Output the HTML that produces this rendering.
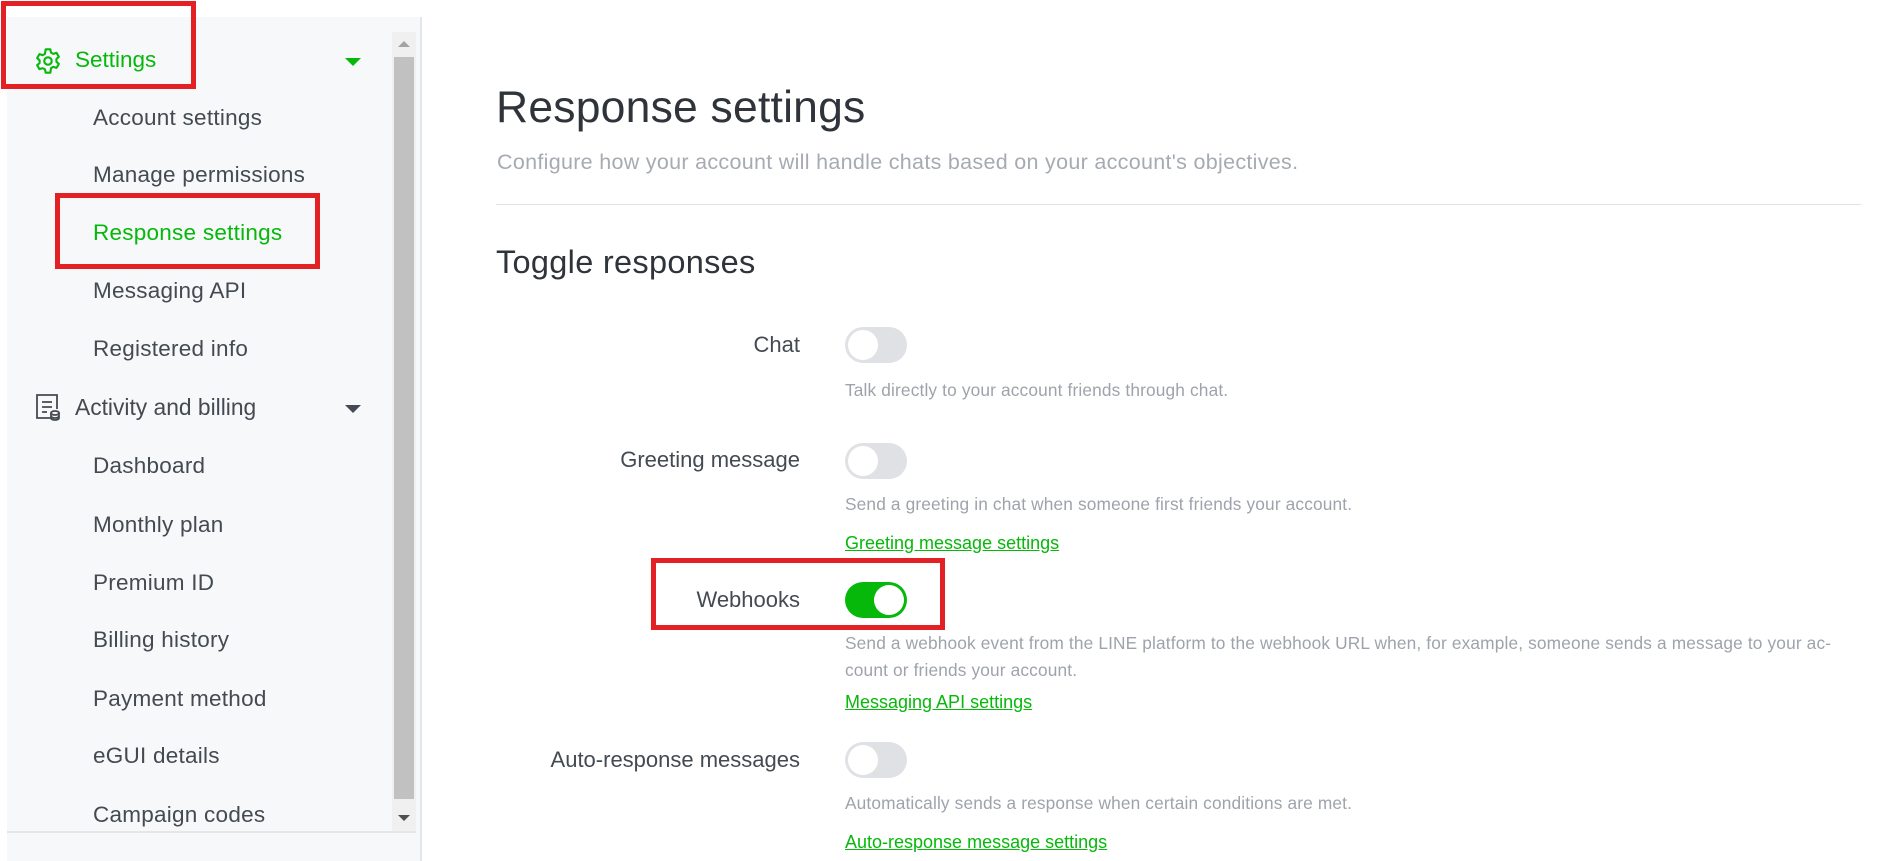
<!DOCTYPE html>
<html><head><meta charset="utf-8"><style>
*{margin:0;padding:0;box-sizing:border-box}
body{width:1895px;height:861px;background:#fff;font-family:"Liberation Sans",Arial,sans-serif;position:relative;overflow:hidden;color:#383d45}
.abs{position:absolute;white-space:nowrap}
#side{position:absolute;left:7px;top:17px;width:415px;height:844px;background:#f7f8fa;border-right:2px solid #e4e6ea}
.it{position:absolute;left:93px;font-size:22.5px;letter-spacing:.25px;color:#444a52;line-height:24px;white-space:nowrap}
.tg{position:absolute;left:845px;width:62px;height:36px;border-radius:18px;background:#dfe1e5}
.tg::after{content:"";position:absolute;left:3px;top:3px;width:30px;height:30px;border-radius:50%;background:#fff}
.tg.on{background:#06b80a}
.tg.on::after{left:29px}
.lbl{position:absolute;right:1095px;font-size:22px;color:#444a52;line-height:24px;white-space:nowrap}
.desc{position:absolute;left:845px;font-size:17.3px;letter-spacing:.15px;color:#9ea3ab;line-height:20px;white-space:nowrap}
.lnk{position:absolute;left:845px;font-size:18px;color:#06b80a;text-decoration:underline;line-height:20px;white-space:nowrap}
.red{position:absolute;border:5px solid #e32124}
</style></head><body>
<div id="side"></div>
<div class="abs" style="left:392px;top:32px;width:24px;height:800px;background:#f0f0f0"></div>
<div class="abs" style="left:394px;top:57px;width:20px;height:742px;background:#c1c1c1"></div>
<div class="abs" style="left:398px;top:41px;width:0;height:0;border-left:6px solid transparent;border-right:6px solid transparent;border-bottom:6px solid #a3a3a3"></div>
<div class="abs" style="left:398px;top:815px;width:0;height:0;border-left:6px solid transparent;border-right:6px solid transparent;border-top:6px solid #505050"></div>
<div class="abs" style="left:7px;top:831px;width:409px;height:2px;background:#e4e6ea"></div>

<svg class="abs" style="left:34px;top:47px" width="28" height="28" viewBox="0 0 24 24" fill="none" stroke="#06b80a" stroke-width="1.8" stroke-linejoin="round"><path d="M10 2h4l.6 2.8 2 1.1 2.7-.9 2 3.4-2.1 1.9v2.3l2.1 1.9-2 3.4-2.7-.9-2 1.1L14 22h-4l-.6-2.8-2-1.1-2.7.9-2-3.4 2.1-1.9V11.4L2.7 9.5l2-3.4 2.7.9 2-1.1z"/><circle cx="12" cy="12" r="3.2"/></svg>
<div class="abs" style="left:75px;top:47px;font-size:22.5px;color:#06b80a;line-height:26px">Settings</div>
<div class="abs" style="left:345px;top:58px;border-left:8px solid transparent;border-right:8px solid transparent;border-top:8px solid #06b80a"></div>
<div class="it" style="top:106px">Account settings</div>
<div class="it" style="top:163px">Manage permissions</div>
<div class="it" style="top:221px;color:#06b80a">Response settings</div>
<div class="it" style="top:279px">Messaging API</div>
<div class="it" style="top:337px">Registered info</div>
<svg class="abs" style="left:35px;top:393px" width="26" height="28" viewBox="0 0 26 28" fill="none" stroke="#444a52" stroke-width="1.8"><path d="M16 25H2V2h20v14"/><path d="M7 9h10M7 14h10M7 19h5"/><ellipse cx="20" cy="20" rx="4" ry="2"/><path d="M16 20v5c0 1.1 1.8 2 4 2s4-.9 4-2v-5M16 23c0 1.1 1.8 2 4 2s4-.9 4-2"/></svg>
<div class="abs" style="left:75px;top:394px;font-size:22.8px;color:#444a52;line-height:26px">Activity and billing</div>
<div class="abs" style="left:345px;top:405px;border-left:8px solid transparent;border-right:8px solid transparent;border-top:8px solid #444a52"></div>
<div class="it" style="top:454px">Dashboard</div>
<div class="it" style="top:513px">Monthly plan</div>
<div class="it" style="top:571px">Premium ID</div>
<div class="it" style="top:628px">Billing history</div>
<div class="it" style="top:687px">Payment method</div>
<div class="it" style="top:744px">eGUI details</div>
<div class="it" style="top:803px">Campaign codes</div>

<div class="red" style="left:1px;top:1px;width:195px;height:88px"></div>
<div class="red" style="left:55px;top:193px;width:265px;height:76px"></div>

<div class="abs" style="left:496px;top:83px;font-size:44.5px;letter-spacing:.2px;color:#2f343b;line-height:50px">Response settings</div>
<div class="abs" style="left:497px;top:150px;font-size:21.5px;letter-spacing:.3px;color:#a6abb2;line-height:24px">Configure how your account will handle chats based on your account's objectives.</div>
<div class="abs" style="left:496px;top:204px;width:1365px;height:1px;background:#e1e3e6"></div>
<div class="abs" style="left:496px;top:244px;font-size:32.5px;letter-spacing:.3px;color:#2f343b;line-height:36px">Toggle responses</div>

<div class="lbl" style="top:333px">Chat</div>
<div class="tg" style="top:327px"></div>
<div class="desc" style="top:380px">Talk directly to your account friends through chat.</div>

<div class="lbl" style="top:448px">Greeting message</div>
<div class="tg" style="top:443px"></div>
<div class="desc" style="top:494px">Send a greeting in chat when someone first friends your account.</div>
<div class="lnk" style="top:533px">Greeting message settings</div>

<div class="lbl" style="top:588px">Webhooks</div>
<div class="tg on" style="top:582px"></div>
<div class="red" style="left:651px;top:558px;width:294px;height:72px"></div>
<div class="desc" style="top:633px">Send a webhook event from the LINE platform to the webhook URL when, for example, someone sends a message to your ac-</div>
<div class="desc" style="top:660px">count or friends your account.</div>
<div class="lnk" style="top:692px">Messaging API settings</div>

<div class="lbl" style="top:748px">Auto-response messages</div>
<div class="tg" style="top:742px"></div>
<div class="desc" style="top:793px">Automatically sends a response when certain conditions are met.</div>
<div class="lnk" style="top:832px">Auto-response message settings</div>
</body></html>
